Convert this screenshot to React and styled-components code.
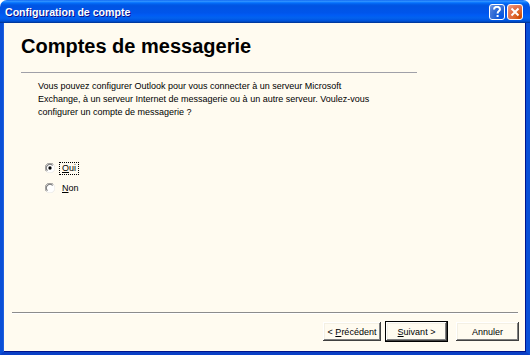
import React from "react";
import styled, { createGlobalStyle } from "styled-components";

const Global = createGlobalStyle`
  html, body { margin: 0; padding: 0; background: #ffffff; }
  body { width: 530px; height: 355px; overflow: hidden; }
`;

const Window = styled.div`
  width: 530px;
  height: 355px;
  display: flex;
  flex-direction: column;
  font-family: "Liberation Sans", Arial, sans-serif;
  color: #000;
`;

const TitleBar = styled.div`
  height: 23px;
  flex: none;
  display: flex;
  align-items: center;
  padding: 0 7px 0 5px;
  border-radius: 7px 7px 0 0;
  background: linear-gradient(
    to bottom,
    #0058ee 0%,
    #3593ff 4%,
    #288eff 7%,
    #127dff 10%,
    #036ffc 13%,
    #0262ee 17%,
    #0057e5 22%,
    #0054e3 26%,
    #0055eb 56%,
    #005bf5 66%,
    #0262ee 78%,
    #0057e5 86%,
    #0052d6 92%,
    #0040ab 96%,
    #003092 100%
  );
`;

const TitleText = styled.span`
  flex: 1;
  color: #ffffff;
  font-weight: bold;
  font-size: 10.6px;
  text-shadow: 1px 1px #0f1089;
  white-space: nowrap;
`;

const CaptionButton = styled.div`
  width: 16px;
  height: 16px;
  margin-left: 2px;
  box-sizing: border-box;
  border: 1px solid #ffffff;
  border-radius: 3px;
  display: flex;
  align-items: center;
  justify-content: center;
  background: ${(p) =>
    p.$variant === "close"
      ? "radial-gradient(circle at 85% 85%, #cc4600 0%, #dc6527 30%, #e2704a 60%, #f3a58d 100%)"
      : "radial-gradient(circle at 85% 85%, #0054e9 0%, #2263d5 40%, #4477d8 70%, #78a0e6 100%)"};
`;

const Frame = styled.div`
  flex: 1;
  display: flex;
  flex-direction: column;
  background: #fffbf0;
  border-left: 3px solid #0a4fd7;
  border-right: 4px solid #0a4fd7;
  border-bottom: 3px solid #0a3fc5;
  box-shadow: inset 1px 0 #1e5fe0, inset -1px 0 #00138c, inset 0 -1px #00138c;
`;

const Header = styled.div`
  padding: 11px 0 0 18px;
`;

const PageTitle = styled.h1`
  margin: 0;
  font-family: "Liberation Sans", Arial, sans-serif;
  font-size: 20px;
  font-weight: bold;
  line-height: 25px;
`;

const HeaderRule = styled.div`
  margin-top: 13px;
  width: 396px;
  height: 1px;
  background: #a0a0a8;
`;

const Body = styled.div`
  padding: 7px 0 0 35px;
  font-size: 9px;
  line-height: 13px;
`;

const Paragraph = styled.p`
  margin: 0;
  width: 345px;
`;

const RadioGroup = styled.div`
  margin-top: 42px;
  display: flex;
  flex-direction: column;
  gap: 6px;
`;

const RadioRow = styled.label`
  display: flex;
  align-items: center;
  height: 14px;
  padding-left: 7px;
  gap: 4px;
`;

const RadioLabel = styled.span`
  padding: 0 2px;
  border: 1px dotted ${(p) => (p.$focused ? "#000" : "transparent")};
  line-height: 11px;
`;

const Key = styled.span`
  text-decoration: underline;
`;

const Spacer = styled.div`
  flex: 1;
`;

const FooterRule = styled.div`
  margin: 0 8px 8px 9px;
  height: 1px;
  background: #8c8c8c;
  box-shadow: 0 1px #ffffff;
`;

const ButtonRow = styled.div`
  display: flex;
  justify-content: flex-end;
  padding: 0 6px 10px 0;
`;

const Button = styled.button`
  width: ${(p) => p.$w}px;
  height: 21px;
  margin-left: ${(p) => p.$gap || 0}px;
  padding: 0;
  font-family: "Liberation Sans", Arial, sans-serif;
  font-size: 9px;
  color: #000;
  background: #fffbf0;
  border: 1px solid ${(p) => (p.$default ? "#000000" : "transparent")};
  box-shadow: inset -1px -1px #404040, inset 1px 1px #ffffff,
    inset -2px -2px #808080, inset 2px 2px #f4f0e4;
  display: flex;
  align-items: center;
  justify-content: center;
`;

function Radio({ checked }) {
  return (
    <svg width="10" height="10" viewBox="0 0 12 12">
      <circle cx="6" cy="6" r="5.5" fill="#ffffff" />
      <path d="M10.2 1.8 A5.5 5.5 0 0 0 1.8 10.2" stroke="#808080" strokeWidth="1" fill="none" />
      <path d="M9.2 2.8 A4.3 4.3 0 0 0 2.8 9.2" stroke="#404040" strokeWidth="1" fill="none" />
      <path d="M1.8 10.2 A5.5 5.5 0 0 0 10.2 1.8" stroke="#e8e8e8" strokeWidth="1" fill="none" />
      {checked && <circle cx="6" cy="6" r="2" fill="#000" />}
    </svg>
  );
}

export default function App() {
  return (
    <>
      <Global />
      <Window>
        <TitleBar>
          <TitleText>Configuration de compte</TitleText>
          <CaptionButton $variant="help">
            <svg width="10" height="12" viewBox="0 0 10 12">
              <path
                d="M2 3.6 C2 1.6 3.4 0.8 5 0.8 C6.8 0.8 8 1.8 8 3.3 C8 5 5.6 5.2 5.6 7.4"
                stroke="#fff"
                strokeWidth="2"
                fill="none"
              />
              <rect x="4.6" y="9" width="2" height="2" fill="#fff" />
            </svg>
          </CaptionButton>
          <CaptionButton $variant="close">
            <svg width="10" height="10" viewBox="0 0 10 10">
              <path d="M1.5 1.5 L8.5 8.5 M8.5 1.5 L1.5 8.5" stroke="#fff" strokeWidth="2" />
            </svg>
          </CaptionButton>
        </TitleBar>
        <Frame>
          <Header>
            <PageTitle>Comptes de messagerie</PageTitle>
            <HeaderRule />
          </Header>
          <Body>
            <Paragraph>
              Vous pouvez configurer Outlook pour vous connecter à un serveur Microsoft
              Exchange, à un serveur Internet de messagerie ou à un autre serveur. Voulez-vous
              configurer un compte de messagerie ?
            </Paragraph>
            <RadioGroup>
              <RadioRow>
                <Radio checked />
                <RadioLabel $focused>
                  <Key>O</Key>ui
                </RadioLabel>
              </RadioRow>
              <RadioRow>
                <Radio />
                <RadioLabel>
                  <Key>N</Key>on
                </RadioLabel>
              </RadioRow>
            </RadioGroup>
          </Body>
          <Spacer />
          <FooterRule />
          <ButtonRow>
            <Button $w={60}>
              &lt;&nbsp;<Key>P</Key>récédent
            </Button>
            <Button $w={63} $gap={3} $default>
              <Key>S</Key>uivant &gt;
            </Button>
            <Button $w={65} $gap={7}>
              Annuler
            </Button>
          </ButtonRow>
        </Frame>
      </Window>
    </>
  );
}
